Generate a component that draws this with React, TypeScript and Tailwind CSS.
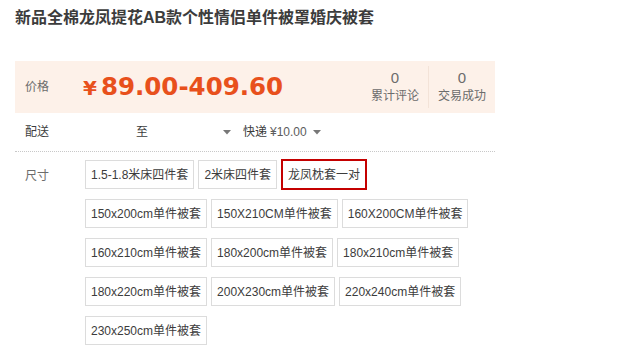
import React from "react";

const sizes: string[][] = [
  ["1.5-1.8米床四件套", "2米床四件套", "龙凤枕套一对"],
  ["150x200cm单件被套", "150X210CM单件被套", "160X200CM单件被套"],
  ["160x210cm单件被套", "180x200cm单件被套", "180x210cm单件被套"],
  ["180x220cm单件被套", "200X230cm单件被套", "220x240cm单件被套"],
  ["230x250cm单件被套"],
];

const Caret = () => (
  <svg width="8" height="5" viewBox="0 0 8 5" className="inline-block">
    <path d="M0 0 L8 0 L4 4.5 Z" fill="#777" />
  </svg>
);

const App: React.FC = () => {
  return (
    <div
      className="w-[630px] h-[351px] bg-white px-[15px] text-[12px] text-[#3c3c3c]"
      style={{ fontFamily: '"Liberation Sans", "Noto Sans CJK SC", sans-serif' }}
    >
      <h1 className="pt-[7px] text-[16px] leading-[22px] font-bold text-[#3c3c3c]">
        新品全棉龙凤提花AB款个性情侣单件被罩婚庆被套
      </h1>

      <div className="mt-[32px] w-[480px] h-[52px] bg-[#fdf1e9] flex items-center">
        <span className="pl-[10px] w-[68px] text-[#6c6c6c]">价格</span>
        <span
          className="text-[#e8501c] font-bold text-[24.5px] leading-none flex items-baseline"
          style={{ fontFamily: '"DejaVu Sans", sans-serif' }}
        >
          <span className="text-[20px] mr-[4px]">¥</span>89.00-409.60
        </span>
        <div className="ml-auto flex h-[42px] items-stretch">
          <div className="w-[66px] flex flex-col items-center justify-center">
            <span className="text-[15px] leading-[18px] text-[#6c6c6c]">0</span>
            <span className="leading-[18px] text-[#6c6c6c]">累计评论</span>
          </div>
          <div className="w-px bg-[#f3e3d8]" />
          <div className="w-[66px] flex flex-col items-center justify-center">
            <span className="text-[15px] leading-[18px] text-[#6c6c6c]">0</span>
            <span className="leading-[18px] text-[#6c6c6c]">交易成功</span>
          </div>
        </div>
      </div>

      <div className="w-[480px] h-[39px] flex items-center border-b border-dotted border-[#c8c8c8] text-[#3c3c3c]">
        <span className="pl-[10px] w-[121px]">配送</span>
        <span className="w-[87px]">至</span>
        <Caret />
        <span className="ml-[12px]">快递</span>
        <span className="ml-[3px] text-[#5c5c5c]">¥10.00</span>
        <span className="ml-[6px]">
          <Caret />
        </span>
      </div>

      <div className="flex pt-[8px]">
        <span className="pl-[10px] w-[70px] pt-[7px] text-[#6c6c6c]">尺寸</span>
        <div className="flex flex-col gap-y-[10px]">
          {sizes.map((row, i) => (
            <div key={i} className="flex gap-x-[4px]">
              {row.map((s) => {
                const selected = s === "龙凤枕套一对";
                return (
                  <span
                    key={s}
                    className={
                      selected
                        ? "h-[31px] -my-[1px] px-[5px] flex items-center border-2 border-[#c40000] text-[#3c3c3c]"
                        : "h-[29px] px-[5px] flex items-center border border-[#dcdcdc] text-[#3c3c3c]"
                    }
                  >
                    {s}
                  </span>
                );
              })}
            </div>
          ))}
        </div>
      </div>
    </div>
  );
};

export default App;
